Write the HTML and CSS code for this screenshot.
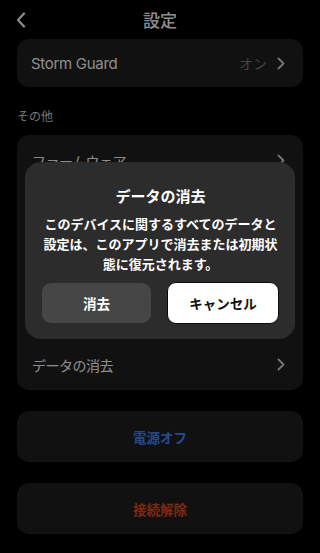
FILE: index.html
```html
<!DOCTYPE html>
<html lang="ja">
<head>
<meta charset="utf-8">
<title>設定</title>
<link rel="stylesheet" href="styles.css">
</head>
<body>
<div class="screen">
  <header class="topbar">
    <span class="back">
      <svg width="10" height="16" viewBox="0 0 10 16"><path d="M8 1.5 L2 8 L8 14.5" fill="none" stroke="#fff" stroke-width="2.2" stroke-linecap="round" stroke-linejoin="round"/></svg>
    </span>
    <h1 class="title">設定</h1>
    <span></span>
  </header>

  <main class="content">
    <section class="card">
      <div class="row">
        <span class="label latin">Storm Guard</span>
        <span class="value">オン</span>
        <svg class="chev" width="8" height="13" viewBox="0 0 8 13"><path d="M1.5 1.5 L6.5 6.5 L1.5 11.5" fill="none" stroke="#d6d6d6" stroke-width="1.8" stroke-linecap="round" stroke-linejoin="round"/></svg>
      </div>
    </section>

    <div class="section-label">その他</div>

    <section class="card">
      <div class="row tall">
        <span class="label">ファームウェア</span>
        <svg class="chev" width="8" height="13" viewBox="0 0 8 13"><path d="M1.5 1.5 L6.5 6.5 L1.5 11.5" fill="none" stroke="#d6d6d6" stroke-width="1.8" stroke-linecap="round" stroke-linejoin="round"/></svg>
      </div>
      <div class="row tall"><span class="label"></span></div>
      <div class="row tall"><span class="label"></span></div>
      <div class="row tall"><span class="label"></span></div>
      <div class="row tall">
        <span class="label">データの消去</span>
        <svg class="chev" width="8" height="13" viewBox="0 0 8 13"><path d="M1.5 1.5 L6.5 6.5 L1.5 11.5" fill="none" stroke="#d6d6d6" stroke-width="1.8" stroke-linecap="round" stroke-linejoin="round"/></svg>
      </div>
    </section>

    <section class="card action blue">電源オフ</section>
    <section class="card action red">接続解除</section>
  </main>

  <div class="overlay">
    <div class="dialog">
      <h2 class="dialog-title">データの消去</h2>
      <p class="dialog-body">このデバイスに関するすべてのデータと<br>設定は、このアプリで消去または初期状<br>態に復元されます。</p>
      <div class="dialog-buttons">
        <button class="btn btn-erase">消去</button>
        <button class="btn btn-cancel">キャンセル</button>
      </div>
    </div>
  </div>
</div>
</body>
</html>
```

FILE: styles.css
```css
* { box-sizing: border-box; }

html, body {
  margin: 0;
  padding: 0;
  background: #000;
}

body {
  font-family: Inter, "Noto Sans CJK JP", sans-serif;
  color: #fff;
}

.screen {
  position: relative;
  width: 320px;
  height: 553px;
  overflow: hidden;
  background: #000;
}

.topbar {
  height: 39px;
  display: grid;
  grid-template-columns: 1fr auto 1fr;
  align-items: center;
  padding: 0 16px;
}

.back {
  display: flex;
  align-items: center;
}

.title {
  margin: 0;
  font-family: "Noto Sans CJK JP", sans-serif;
  font-size: 17px;
  font-weight: 500;
  line-height: 22px;
  color: #fff;
  padding-top: 1px;
}

.content {
  padding: 0 17px;
  display: flex;
  flex-direction: column;
}

.card {
  background: #1f1f1f;
  border-radius: 12px;
  width: 286px;
}

.row {
  height: 48px;
  display: flex;
  align-items: center;
  padding: 0 18px 0 14px;
}

.row.tall {
  height: 51px;
  padding-left: 15px;
}

.label {
  flex: 1;
  font-family: "Noto Sans CJK JP", sans-serif;
  font-size: 14px;
  color: #fff;
  letter-spacing: -0.5px;
}

.label.latin {
  font-family: Inter, "Noto Sans CJK JP", sans-serif;
  font-size: 15px;
  letter-spacing: -0.3px;
}

.value {
  font-family: "Noto Sans CJK JP", sans-serif;
  font-size: 14px;
  color: #7c7c7c;
  margin-right: 10px;
}

.chev {
  display: block;
}

.section-label {
  font-family: "Noto Sans CJK JP", sans-serif;
  font-size: 12px;
  line-height: 17px;
  color: #d8d8d8;
  padding: 20px 0 11px 0;
}

.action {
  margin-top: 21px;
  height: 51px;
  display: flex;
  align-items: center;
  justify-content: center;
  font-family: "Noto Sans CJK JP", sans-serif;
  font-size: 13.5px;
  font-weight: 600;
}

.blue { color: #4386ff; }
.red { color: #e24c1e; }

.overlay {
  position: absolute;
  inset: 0;
  background: rgba(0, 0, 0, 0.45);
  display: flex;
  justify-content: center;
  align-items: flex-start;
  padding-top: 162px;
}

.dialog {
  width: 270px;
  height: 177px;
  background: #2c2c2c;
  border-radius: 16px;
  padding: 24px 16px 0 17px;
  display: flex;
  flex-direction: column;
  align-items: center;
  font-family: "Noto Sans CJK JP", sans-serif;
}

.dialog-title {
  margin: 0;
  font-size: 15px;
  line-height: 20px;
  font-weight: 700;
  color: #fff;
}

.dialog-body {
  margin: 8px 0 0 0;
  font-size: 13px;
  line-height: 20px;
  font-weight: 700;
  text-align: center;
  color: #fff;
  white-space: nowrap;
}

.dialog-buttons {
  margin-top: 8px;
  width: 100%;
  display: flex;
  justify-content: space-between;
  align-items: center;
}

.btn {
  font-family: "Noto Sans CJK JP", sans-serif;
  font-size: 13.5px;
  font-weight: 700;
  border-radius: 9px;
  padding: 0;
  display: flex;
  align-items: center;
  justify-content: center;
}

.btn-erase {
  width: 109px;
  height: 40px;
  background: #464646;
  color: #fff;
  border: none;
}

.btn-cancel {
  width: 112px;
  height: 42px;
  background: #fff;
  color: #111;
  border: 1.5px solid #0a0a0a;
}
```
